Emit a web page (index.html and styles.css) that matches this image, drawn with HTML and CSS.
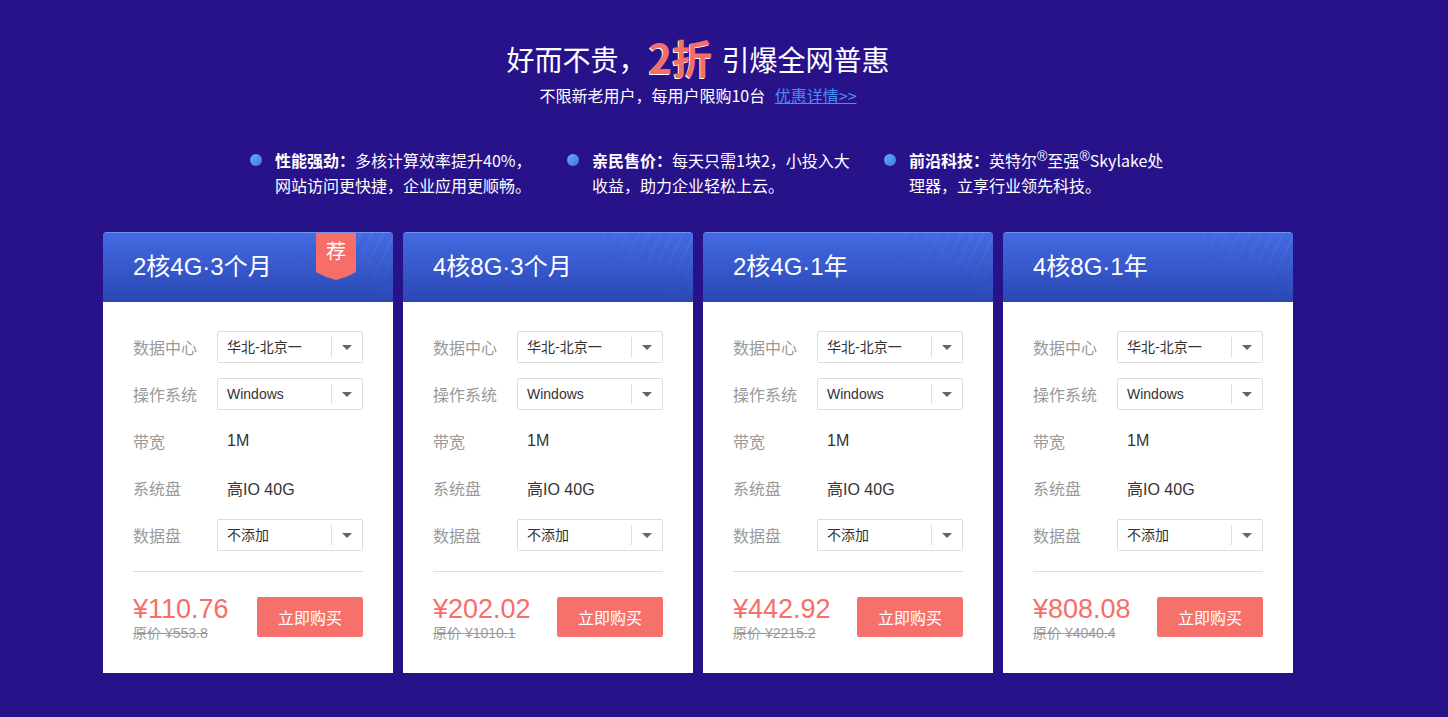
FILE: index.html
```html
<!DOCTYPE html>
<html lang="zh-CN">
<head>
  <meta charset="UTF-8">
  <meta name="viewport" content="width=device-width, initial-scale=1.0">
  <title>好而不贵 2折 引爆全网普惠</title>
  <link rel="stylesheet" href="styles.css">
</head>
<body>
  <div class="container">
    <div class="banner">
      <h1>好而不贵，<span class="discount">2折</span> 引爆全网普惠</h1>
      <p class="sub">不限新老用户，每用户限购10台 <a href="#">优惠详情&gt;&gt;</a></p>
    </div>

    <ul class="features">
      <li><i class="dot"></i><p><b>性能强劲：</b>多核计算效率提升40%，<br>网站访问更快捷，企业应用更顺畅。</p></li>
      <li><i class="dot"></i><p><b>亲民售价：</b>每天只需1块2，小投入大<br>收益，助力企业轻松上云。</p></li>
      <li><i class="dot"></i><p><b>前沿科技：</b>英特尔<sup>®</sup>至强<sup>®</sup>Skylake处<br>理器，立享行业领先科技。</p></li>
    </ul>

    <div class="cards" id="cards"></div>
  </div>

  <script>
    const plans = [
      { name: '2核4G·3个月', price: '110.76', old: '553.8', hot: true },
      { name: '4核8G·3个月', price: '202.02', old: '1010.1' },
      { name: '2核4G·1年', price: '442.92', old: '2215.2' },
      { name: '4核8G·1年', price: '808.08', old: '4040.4' }
    ];

    const cards = document.getElementById('cards');

    function select(text) {
      return `<div class="select"><span>${text}</span><em class="arrow"></em></div>`;
    }

    plans.forEach(plan => {
      const card = document.createElement('div');
      card.className = 'card';
      card.innerHTML = `
        <div class="card-head">
          <h3>${plan.name}</h3>
          ${plan.hot ? '<span class="badge">荐</span>' : ''}
        </div>
        <div class="card-body">
          <div class="row"><label>数据中心</label>${select('华北-北京一')}</div>
          <div class="row"><label>操作系统</label>${select('Windows')}</div>
          <div class="row"><label>带宽</label><span class="value">1M</span></div>
          <div class="row"><label>系统盘</label><span class="value">高IO 40G</span></div>
          <div class="row"><label>数据盘</label>${select('不添加')}</div>
          <div class="buy">
            <div class="price">
              <strong>¥${plan.price}</strong>
              <s>原价 ¥${plan.old}</s>
            </div>
            <button>立即购买</button>
          </div>
        </div>
      `;
      cards.appendChild(card);
    });
  </script>
</body>
</html>
```

FILE: styles.css
```css
body {
  margin: 0;
  padding: 0;
  background-color: #27128a;
  font-family: "Noto Sans CJK SC", "Open Sans", sans-serif;
  color: #fff;
}

.container {
  width: 1190px;
  margin-left: 103px;
  padding-top: 37px;
}

.banner {
  text-align: center;
}

.banner h1 {
  margin: 0;
  font-size: 28px;
  font-weight: normal;
  line-height: 40px;
}

.discount {
  display: inline-block;
  margin: 0 3px 0 2px;
  color: #f76e69;
  font-size: 40px;
  font-weight: bold;
  line-height: 40px;
  text-shadow: -1px 1px 0 #fff;
  vertical-align: -3px;
}

.sub {
  margin: 5px 0 0;
  font-size: 16px;
  line-height: 22px;
}

.sub a {
  margin-left: 6px;
  color: #4b8bf5;
}

.features {
  list-style: none;
  margin: 42px 0 0;
  padding: 0 0 0 147px;
  display: flex;
}

.features li {
  width: 317px;
  display: flex;
  gap: 13px;
}

.features p {
  margin: 0;
  font-size: 16px;
  line-height: 25px;
}

.features sup {
  font-family: "Liberation Sans", sans-serif;
  font-size: 14px;
  line-height: 0;
}

.dot {
  width: 12px;
  height: 12px;
  margin-top: 6px;
  border-radius: 50%;
  flex-shrink: 0;
  background: linear-gradient(135deg, #6aaaf8, #3d78e6);
}

.cards {
  display: flex;
  gap: 10px;
  margin-top: 34px;
}

.card {
  width: 290px;
  position: relative;
}

.card-head {
  height: 69px;
  border-top: 1px solid #7391ee;
  border-radius: 4px 4px 0 0;
  background: linear-gradient(#436ae2, #2a47b4);
  padding-left: 30px;
  display: flex;
  align-items: center;
  position: relative;
  overflow: hidden;
}

.card-head::after {
  content: "";
  position: absolute;
  top: 0;
  right: 0;
  width: 130px;
  height: 100%;
  background: repeating-linear-gradient(115deg, rgba(255, 255, 255, 0) 0 8px, rgba(255, 255, 255, 0.06) 8px 10px);
  -webkit-mask-image: linear-gradient(205deg, #000 5%, transparent 60%);
  mask-image: linear-gradient(205deg, #000 5%, transparent 60%);
}

.card-head h3 {
  margin: 0;
  margin-top: -1px;
  font-family: "Liberation Sans", "Noto Sans CJK SC", sans-serif;
  font-size: 24px;
  font-weight: normal;
  line-height: 30px;
}

.badge {
  position: absolute;
  top: -3px;
  right: 37px;
  width: 40px;
  height: 50px;
  padding-top: 8px;
  box-sizing: border-box;
  background-color: #f76e69;
  text-align: center;
  font-size: 20px;
  line-height: 26px;
  clip-path: polygon(0 0, 100% 0, 100% 84%, 75% 94%, 50% 100%, 25% 94%, 0 84%);
  z-index: 1;
}

.card-body {
  background: #fff;
  padding: 29px 30px 36px;
}

.row {
  display: flex;
  align-items: center;
  height: 32px;
  margin-bottom: 15px;
}

.row label {
  width: 84px;
  color: #999;
  font-size: 16px;
}

.value {
  padding-left: 10px;
  color: #333;
  font-family: "Liberation Sans", "Noto Sans CJK SC", sans-serif;
  font-size: 16px;
}

.select {
  width: 146px;
  height: 32px;
  box-sizing: border-box;
  border: 1px solid #ddd;
  border-radius: 2px;
  display: flex;
  align-items: center;
  color: #333;
  font-family: "Liberation Sans", "Noto Sans CJK SC", sans-serif;
  font-size: 14px;
}

.select span {
  flex: 1;
  padding-left: 9px;
  line-height: 20px;
  border-right: 1px solid #ddd;
}

.arrow {
  width: 30px;
  display: flex;
  justify-content: center;
}

.arrow::before {
  content: "";
  border-left: 5px solid transparent;
  border-right: 5px solid transparent;
  border-top: 5px solid #666;
}

.buy {
  margin-top: 20px;
  padding-top: 25px;
  border-top: 1px solid #ddd;
  display: flex;
  justify-content: space-between;
}

.price {
  height: 40px;
  margin-top: -3px;
  font-family: "Liberation Sans", "Noto Sans CJK SC", sans-serif;
}

.price strong {
  display: block;
  color: #f76e69;
  font-size: 27px;
  font-weight: normal;
  line-height: 30px;
}

.price s {
  display: block;
  margin-top: 1px;
  color: #999;
  font-size: 14px;
  line-height: 17px;
}

.buy button {
  width: 106px;
  height: 40px;
  border: none;
  border-radius: 2px;
  background-color: #f7716c;
  color: #fff;
  font-family: inherit;
  font-size: 16px;
  cursor: pointer;
}
```
